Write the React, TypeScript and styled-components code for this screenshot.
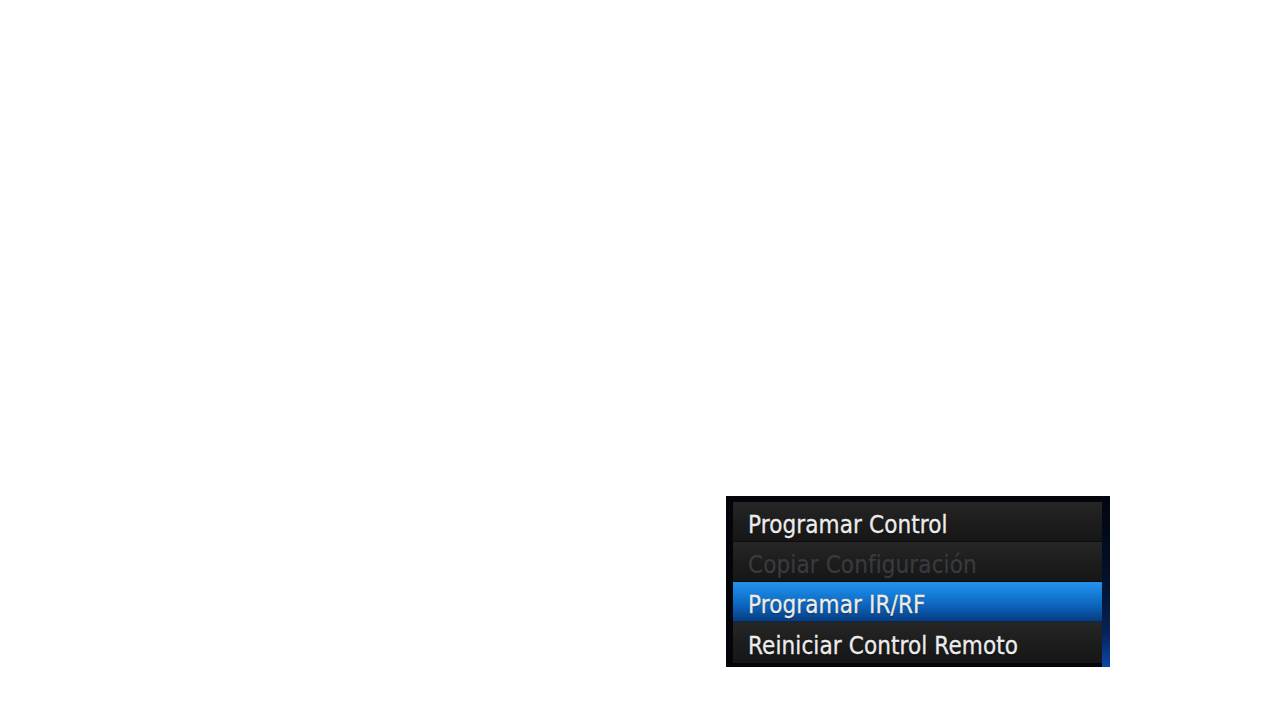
import { Fragment } from 'react';
import styled, { createGlobalStyle } from 'styled-components';

const GlobalStyle = createGlobalStyle`
  * {
    margin: 0;
    padding: 0;
    box-sizing: border-box;
  }

  body {
    background-color: #ffffff;
    font-family: 'DejaVu Sans Condensed', 'DejaVu Sans', sans-serif;
  }
`;

const Pagina = styled.div`
  width: 1280px;
  height: 720px;
  padding: 496px 0 0 726px;
`;

const Painel = styled.div`
  width: 384px;
  height: 171px;
  background: #03050a;
  display: flex;
  padding: 6px 0 4px 7px;
`;

const Lista = styled.ul`
  list-style: none;
  width: 369px;
  display: flex;
  flex-direction: column;
`;

const Barra = styled.div`
  width: 8px;
  margin-top: -6px;
  margin-bottom: -4px;
  background: linear-gradient(180deg, #02060f 0%, #031028 45%, #06235a 80%, #0a48a8 100%);
`;

const Item = styled.li<{ ativo?: boolean; desativado?: boolean }>`
  height: 40px;
  display: flex;
  align-items: center;
  padding: 7px 0 0 15px;
  font-size: 24px;
  letter-spacing: 0.1px;
  color: ${props => (props.desativado ? '#383b3f' : '#ececec')};
  -webkit-text-stroke: ${props => (props.desativado ? '0.2px #383b3f' : '0.3px #ececec')};
  background: ${props =>
    props.ativo
      ? 'linear-gradient(180deg, #2592ec 0%, #137ad4 35%, #0b5bb0 70%, #083d80 100%)'
      : 'linear-gradient(180deg, #262626 0%, #1d1d1d 50%, #161616 100%)'};
  border-bottom: 1px solid ${props => (props.ativo ? '#06274f' : '#0c0c0c')};
  text-shadow: ${props => (props.desativado ? 'none' : '0 1px 1px rgba(0,0,0,0.6)')};
  &:last-child {
    height: 41px;
    border-bottom: none;
  }
`;

const itens = [
  { texto: 'Programar Control' },
  { texto: 'Copiar Configuración', desativado: true },
  { texto: 'Programar IR/RF', ativo: true },
  { texto: 'Reiniciar Control Remoto' },
];

function App() {
  return (
    <Fragment>
      <GlobalStyle />
      <Pagina>
        <Painel>
          <Lista>
            {itens.map(item => (
              <Item key={item.texto} ativo={item.ativo} desativado={item.desativado}>
                {item.texto}
              </Item>
            ))}
          </Lista>
          <Barra />
        </Painel>
      </Pagina>
    </Fragment>
  );
}

export default App;
